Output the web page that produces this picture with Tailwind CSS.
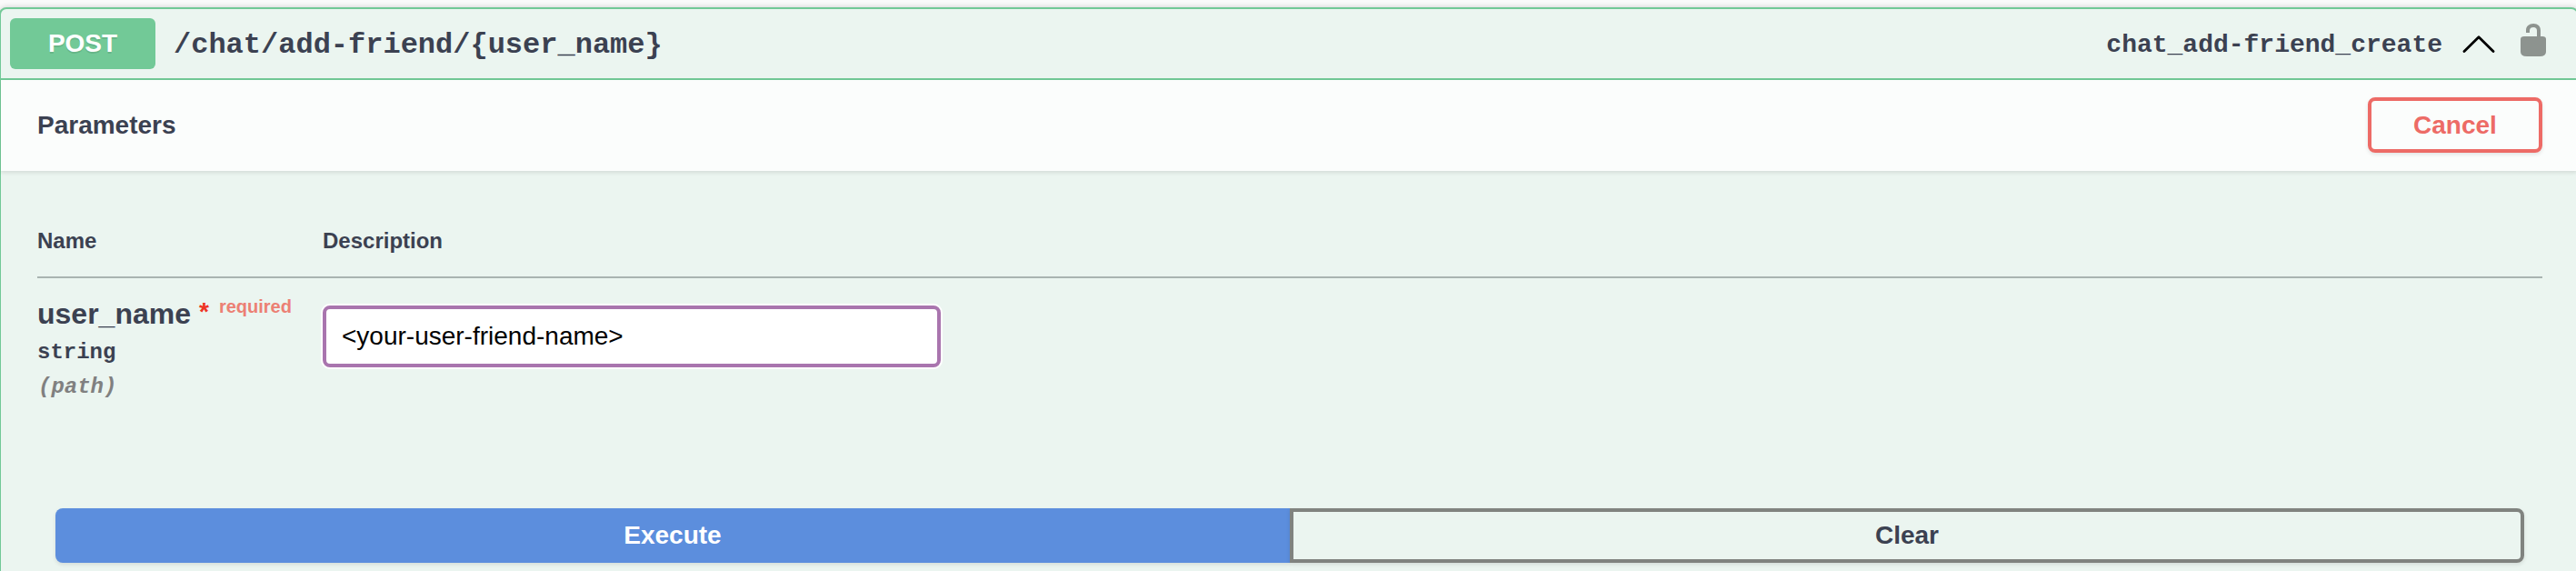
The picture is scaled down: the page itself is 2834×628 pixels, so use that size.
<!DOCTYPE html>
<html lang="en">
<head>
<meta charset="utf-8">
<title>POST /chat/add-friend/{user_name}</title>
<script src="https://cdn.jsdelivr.net/npm/@tailwindcss/browser@4"></script>
</head>
<body class="w-[2834px] h-[628px] overflow-hidden bg-[#fafafa] pt-2 font-['Liberation_Sans',Arial,sans-serif] text-[28px] font-bold text-[#3b4151]">
<section class="-ml-px w-[2838px] h-[640px] rounded-t-lg border-2 border-[#72c997] bg-[#ebf5f0] shadow-[0_0_6px_rgba(0,0,0,0.19)]">
  <header class="flex h-[78px] items-center border-b-2 border-[#72c997] pl-2.5">
    <div class="flex h-14 w-40 items-center justify-center rounded-md bg-[#72c997] text-white [text-shadow:0_2px_0_rgba(0,0,0,0.1)]">POST</div>
    <div class="ml-5 pt-[3px] font-['Liberation_Mono','Courier_New',monospace] text-[32px] leading-[38px]">/chat/add-friend/{user_name}</div>
    <div class="ml-auto pt-[3px] font-['Liberation_Mono','Courier_New',monospace] text-[28px] leading-8">chat_add-friend_create</div>
    <svg class="ml-[22px] mr-px h-5 w-9" viewBox="0 0 36 20" fill="none" stroke="#000" stroke-width="2.8" stroke-linecap="round" stroke-linejoin="round"><path d="M2 18.500 18 2.700 34 18.500"/></svg>
    <svg class="ml-[27px] mr-[34px] mb-2 h-9 w-7" viewBox="0 0 28 36"><path fill="#8d938f" d="M24 14H22V7.500C22 2.800 19 0 14.200 0S6 2.800 6 7.500V10H10V7.500C10 5 11.800 4 14.200 4S18 5.200 18 7.500V14H4Q0 14 0 17V31Q0 36 7 36H21Q28 36 28 31V17Q28 14 24 14Z"/></svg>
  </header>
  <div class="flex h-[100px] items-center justify-between bg-[#fbfdfc] pl-10 pr-[38px] shadow-[0_2px_4px_rgba(0,0,0,0.1)]">
    <h4 class="leading-8">Parameters</h4>
    <button class="mb-px h-[61px] w-48 rounded-lg border-4 border-[#ed6b66] text-[#ed6b66] shadow-[0_2px_4px_rgba(0,0,0,0.1)]">Cancel</button>
  </div>
  <div class="pl-10 pr-[38px]">
    <div class="flex h-[118px] border-b-2 border-[#a9b4b1] pt-[63px] text-2xl leading-7">
      <div class="w-[314px]">Name</div>
      <div>Description</div>
    </div>
    <div class="flex h-[253px]">
      <div class="w-[314px] pt-5">
        <div class="flex text-[32px] leading-[38px]">
          <span>user_name</span>
          <span class="ml-[9px] text-[28px] leading-[34px] text-[#ee3424]">*</span>
          <span class="ml-[11px] text-xl leading-[22px] text-[#ec8074]">required</span>
        </div>
        <div class="mt-2.5 font-['Liberation_Mono','Courier_New',monospace] text-2xl leading-7">string</div>
        <div class="mt-2.5 pl-px font-['Liberation_Mono','Courier_New',monospace] text-2xl italic leading-7 text-[#808080]">(path)</div>
      </div>
      <input class="mt-[30px] h-[68px] w-[680px] rounded-lg border-4 border-[#a975ae] bg-white px-[17px] text-[28px] font-normal text-black ring-2 ring-white" type="text" value="&lt;your-user-friend-name&gt;">
    </div>
  </div>
  <div class="flex h-15 pl-15">
    <button class="w-[1358px] rounded-l-lg bg-[#5c8edd] text-white shadow-[0_2px_4px_rgba(0,0,0,0.1)]">Execute</button>
    <button class="w-[1358px] rounded-r-lg border-4 border-[#80837f] shadow-[0_2px_4px_rgba(0,0,0,0.1)]">Clear</button>
  </div>
</section>
</body>
</html>
